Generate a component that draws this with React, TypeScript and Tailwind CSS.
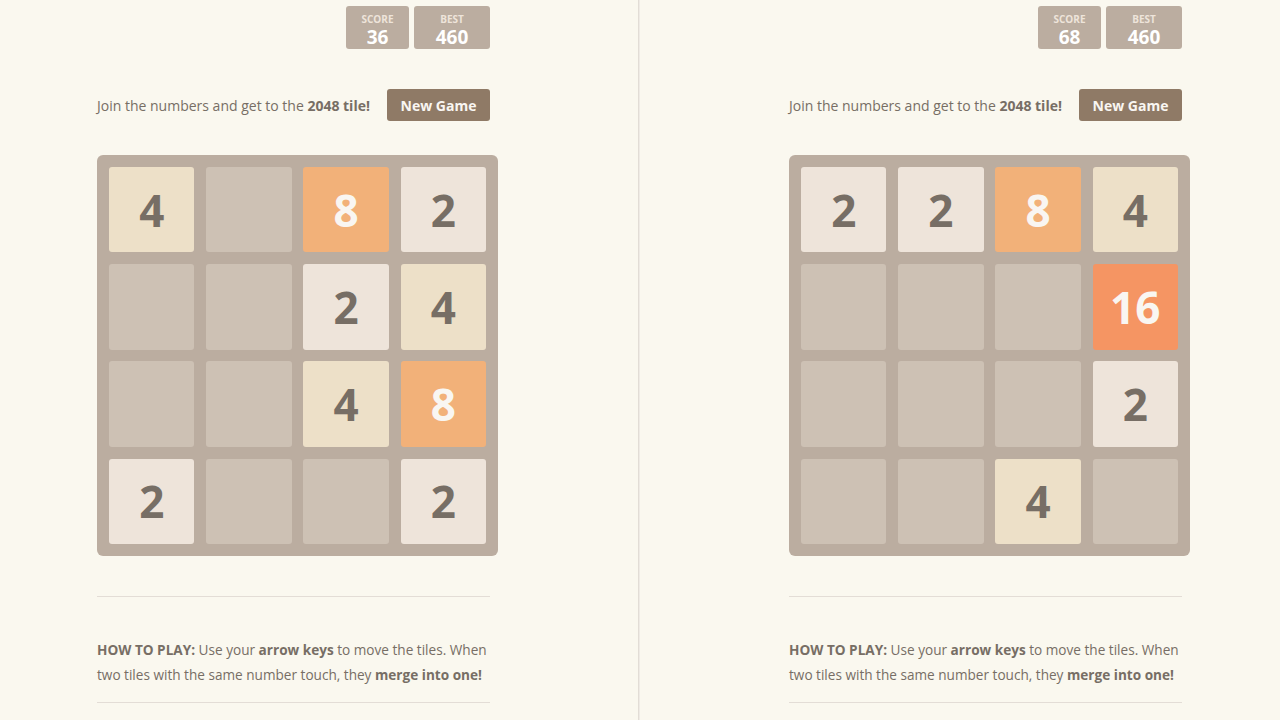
import React from 'react';

type Board = number[][];

const tileStyle = (v: number) => {
  switch (v) {
    case 2:
      return 'bg-[#eee4da] text-[#776e65]';
    case 4:
      return 'bg-[#ede0c8] text-[#776e65]';
    case 8:
      return 'bg-[#f2b179] text-[#f9f6f2]';
    case 16:
      return 'bg-[#f59563] text-[#f9f6f2]';
    default:
      return 'bg-[#cdc1b4]';
  }
};

const ScoreBox = ({ label, value, width }: { label: string; value: number; width: string }) => (
  <div className={`${width} h-[43px] rounded-[3px] bg-[#bbada0] flex flex-col items-center pt-[8px]`}>
    <span className="text-[10px] leading-[10px] font-bold uppercase text-[#eee4da]">{label}</span>
    <span className="mt-[4px] text-[19px] leading-[19px] font-bold text-white">{value}</span>
  </div>
);

const Game = ({ score, best, board }: { score: number; best: number; board: Board }) => (
  <div className="w-[393px]">
    {/* scores */}
    <div className="flex justify-end gap-[5px] pt-[6px]">
      <ScoreBox label="Score" value={score} width="w-[63px]" />
      <ScoreBox label="Best" value={best} width="w-[76px]" />
    </div>

    {/* intro */}
    <div className="mt-[40px] flex items-center justify-between h-[32px]">
      <p className="text-[14px] text-[#776e65]">
        Join the numbers and get to the <strong>2048 tile!</strong>
      </p>
      <button className="h-[32px] w-[103px] rounded-[3px] bg-[#8f7a66] text-[14px] font-bold text-[#f9f6f2]">
        New Game
      </button>
    </div>

    {/* board */}
    <div className="mt-[34px] w-[401px] h-[401px] rounded-[6px] bg-[#bbada0] p-[12px] grid grid-cols-4 grid-rows-4 gap-[11.7px]">
      {board.flat().map((v, i) => (
        <div
          key={i}
          className={`rounded-[3px] flex items-center justify-center text-[44px] font-bold leading-none ${tileStyle(v)}`}
        >
          {v > 0 ? v : ''}
        </div>
      ))}
    </div>

    <hr className="mt-[40px] border-0 h-px bg-[#e3ddd6]" />

    <p className="mt-[40px] text-[13.6px] leading-[25px] text-[#776e65]">
      <strong>HOW TO PLAY:</strong> Use your <strong>arrow keys</strong> to move the tiles. When two tiles
      with the same number touch, they <strong>merge into one!</strong>
    </p>

    <hr className="mt-[15px] border-0 h-px bg-[#e3ddd6]" />
  </div>
);

export default function App() {
  const left: Board = [
    [4, 0, 8, 2],
    [0, 0, 2, 4],
    [0, 0, 4, 8],
    [2, 0, 0, 2],
  ];
  const right: Board = [
    [2, 2, 8, 4],
    [0, 0, 0, 16],
    [0, 0, 0, 2],
    [0, 0, 4, 0],
  ];

  return (
    <div
      className="flex w-[1280px] h-[720px] overflow-hidden bg-[#faf8ef]"
      style={{ fontFamily: '"Open Sans", "Noto Sans", Arial, sans-serif' }}
    >
      <div className="w-[638px] shrink-0 pl-[97px]">
        <Game score={36} best={460} board={left} />
      </div>
      <div className="w-px shrink-0 bg-[#e2ddd6]" />
      <div className="w-px shrink-0 bg-[#efebe5]" />
      <div className="flex-1 pl-[149px]">
        <Game score={68} best={460} board={right} />
      </div>
    </div>
  );
}
